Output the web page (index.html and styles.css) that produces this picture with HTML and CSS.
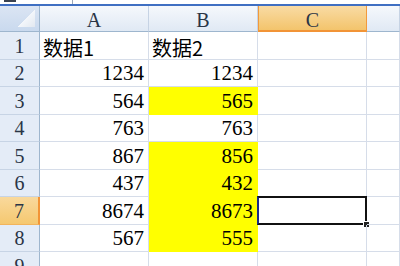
FILE: index.html
```html
<!DOCTYPE html>
<html>
<head>
<meta charset="utf-8">
<link rel="stylesheet" href="styles.css">
</head>
<body>
<div class="topbar"><div class="namebox"><span class="nb-dark"></span></div><div class="fx"></div></div>
<div class="sheet">
  <div class="corner"><span class="tri"></span></div>
  <div class="colh">A</div>
  <div class="colh">B</div>
  <div class="colh sel">C</div>
  <div class="colh last"></div>

  <div class="rowh">1</div>
  <div class="cell t">数据1</div>
  <div class="cell t">数据2</div>
  <div class="cell"></div>
  <div class="cell"></div>

  <div class="rowh">2</div>
  <div class="cell n">1234</div>
  <div class="cell n">1234</div>
  <div class="cell"></div>
  <div class="cell"></div>

  <div class="rowh">3</div>
  <div class="cell n">564</div>
  <div class="cell n y">565</div>
  <div class="cell"></div>
  <div class="cell"></div>

  <div class="rowh">4</div>
  <div class="cell n">763</div>
  <div class="cell n">763</div>
  <div class="cell"></div>
  <div class="cell"></div>

  <div class="rowh">5</div>
  <div class="cell n">867</div>
  <div class="cell n y">856</div>
  <div class="cell"></div>
  <div class="cell"></div>

  <div class="rowh">6</div>
  <div class="cell n">437</div>
  <div class="cell n y">432</div>
  <div class="cell"></div>
  <div class="cell"></div>

  <div class="rowh sel">7</div>
  <div class="cell n">8674</div>
  <div class="cell n y">8673</div>
  <div class="cell active"><span class="handle"></span></div>
  <div class="cell"></div>

  <div class="rowh">8</div>
  <div class="cell n">567</div>
  <div class="cell n y">555</div>
  <div class="cell"></div>
  <div class="cell"></div>

  <div class="rowh">9</div>
  <div class="cell"></div>
  <div class="cell"></div>
  <div class="cell"></div>
  <div class="cell"></div>
</div>
</body>
</html>
```
FILE: styles.css
```css
html, body {
  margin: 0;
  padding: 0;
  width: 400px;
  height: 266px;
  overflow: hidden;
  background: #ffffff;
}
.topbar {
  height: 4px;
  background: #f4f6fa;
  border-bottom: 2px solid #3f6fc2;
  display: flex;
}
.namebox {
  width: 72px;
  border-right: 1px solid #9aa7b8;
  background: #ffffff;
  position: relative;
}
.nb-dark {
  position: absolute;
  left: 4px;
  top: 0;
  width: 12px;
  height: 2px;
  background: #3a4250;
}
.fx {
  flex: 1;
  background: #ffffff;
}
.sheet {
  display: grid;
  grid-template-columns: 40px 109px 109px 109px 33px;
  grid-template-rows: 26px repeat(9, 27.5px);
  font-family: "Liberation Serif", "Noto Sans CJK SC", serif;
  font-size: 21px;
  color: #000;
}
.corner {
  background: linear-gradient(#dbe5f3, #c9d9ee);
  border-right: 1px solid #9eb6ce;
  border-bottom: 1px solid #9eb6ce;
  position: relative;
}
.tri {
  position: absolute;
  right: 4px;
  bottom: 4px;
  width: 18px;
  height: 18px;
  background: linear-gradient(to bottom right, transparent 50%, #f4f7fb 50%, #e2e8f0 100%);
}
.colh {
  background: linear-gradient(#f5f8fc, #e0e9f4);
  border-right: 1px solid #c6d3e4;
  border-bottom: 1px solid #9eb6ce;
  display: flex;
  align-items: center;
  justify-content: center;
  font-size: 20px;
  color: #2a3546;
  padding-top: 4px;
  box-sizing: border-box;
}
.colh.sel {
  background: linear-gradient(#f9dba4, #f3c46c);
  border: 1px solid #f29a3c;
  border-top: none;
  border-bottom: 2px solid #f29436;
}
.rowh {
  background: #e4ecf7;
  border-right: 1px solid #9eb6ce;
  border-bottom: 1px solid #c7d4e5;
  display: flex;
  align-items: flex-end;
  justify-content: center;
  font-size: 20px;
  line-height: 1;
  padding-bottom: 3px;
  box-sizing: border-box;
  color: #2a3546;
}
.rowh.sel {
  background: linear-gradient(#f9d99c, #f5c870);
  border-right: 2px solid #f29436;
  border-bottom: 1px solid #f2b45c;
}
.cell {
  border-right: 1px solid #d6dde9;
  border-bottom: 1px solid #d6dde9;
  display: flex;
  align-items: flex-end;
  padding: 0 4px 2px 4px;
  line-height: 1;
  white-space: nowrap;
  position: relative;
}
.cell.n {
  justify-content: flex-end;
}
.cell.t {
  font-family: "Noto Sans CJK SC", "Liberation Serif", sans-serif;
  font-size: 20px;
  padding-left: 3px;
  padding-bottom: 1px;
}
.cell.y {
  background: #ffff00;
  border-color: #ffff00;
}
.cell.active {
  border: 2px solid #111111;
  border-left-color: #1a2a8a;
  margin-left: -1px;
  margin-top: -1px;
}
.handle {
  position: absolute;
  right: -5px;
  bottom: -5px;
  width: 5px;
  height: 5px;
  background: #222;
  border: 1px solid #ffffff;
}
```
